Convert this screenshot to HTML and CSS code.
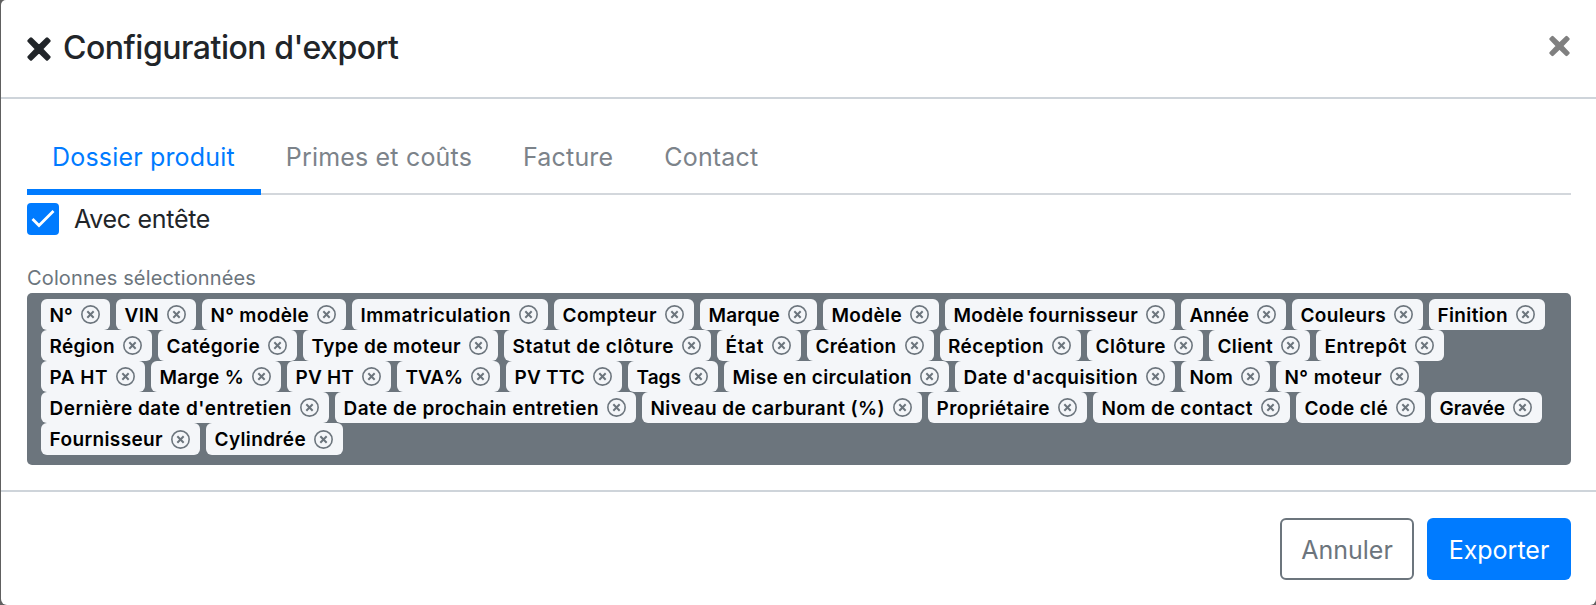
FILE: index.html
```html
<!DOCTYPE html>
<html lang="fr">
<head>
<meta charset="utf-8">
<title>Configuration d'export</title>
<link rel="stylesheet" href="styles.css">
</head>
<body>
<svg class="defs" aria-hidden="true">
  <symbol id="cross" viewBox="0 0 24 24"><path d="M4 2 12 9.6 20 2 22 4 14.4 12 22 20 20 22 12 14.4 4 22 2 20 9.6 12 2 4Z" fill="currentColor" stroke="currentColor" stroke-width="3.2" stroke-linejoin="round"/></symbol>
  <symbol id="remove" viewBox="0 0 18 18"><circle cx="9" cy="9" r="8.2" fill="none" stroke="currentColor" stroke-width="1.5"/><path d="M6 6l6 6M12 6l-6 6" fill="none" stroke="currentColor" stroke-width="1.9"/></symbol>
</svg>
<div class="modal">
  <header class="modal-header">
    <h5 class="modal-title"><svg class="title-icon"><use href="#cross"/></svg><span class="title-text">Configuration d'export</span></h5>
    <button class="close" aria-label="Fermer"><svg class="close-icon"><use href="#cross"/></svg></button>
  </header>
  <main class="modal-body">
    <nav class="tabs">
      <a class="tab active">Dossier produit</a>
      <a class="tab">Primes et coûts</a>
      <a class="tab">Facture</a>
      <a class="tab">Contact</a>
    </nav>
    <label class="check"><span class="box"><svg class="tick" viewBox="0 0 24 20"><path d="M1.5 10 8 16.5 22.5 2" fill="none" stroke="#fff" stroke-width="2.8"/></svg></span><span class="check-text">Avec entête</span></label>
    <div class="label">Colonnes sélectionnées</div>
    <div class="chips" id="chips"></div>
  </main>
  <footer class="modal-footer">
    <button class="btn outline">Annuler</button>
    <button class="btn primary">Exporter</button>
  </footer>
</div>
<script src="chips.js"></script>
</body>
</html>
```
FILE: chips.js
```js
// Each column: [name, chip width in px]
const rows = [
  [["N°", 69], ["VIN", 80], ["N° modèle", 144], ["Immatriculation", 196], ["Compteur", 140], ["Marque", 117], ["Modèle", 116], ["Modèle fournisseur", 230], ["Année", 105], ["Couleurs", 131], ["Finition", 116]],
  [["Région", 111], ["Catégorie", 139], ["Type de moteur", 195], ["Statut de clôture", 207], ["État", 84], ["Création", 126.5], ["Réception", 141.5], ["Clôture", 116], ["Client", 101], ["Entrepôt", 128]],
  [["PA HT", 104], ["Marge %", 130], ["PV HT", 104], ["TVA%", 103], ["PV TTC", 116], ["Tags", 90], ["Mise en circulation", 225], ["Date d'acquisition", 220], ["Nom", 89], ["N° moteur", 143]],
  [["Dernière date d'entretien", 288], ["Date de prochain entretien", 301], ["Niveau de carburant (%)", 280], ["Propriétaire", 159], ["Nom de contact", 197], ["Code clé", 129], ["Gravée", 111]],
  [["Fournisseur", 159], ["Cylindrée", 137]]
];
document.getElementById("chips").innerHTML = rows.map(row =>
  `<div class="chip-row">${row.map(([name, width]) =>
    `<span class="chip" style="width:${width}px"><span class="chip-text">${name}</span><svg class="chip-icon"><use href="#remove"/></svg></span>`).join("")}</div>`).join("");

// Track each label so that it fills its chip evenly.
const TEXT_INSET = 45.5;
document.querySelectorAll(".chip").forEach(chip => {
  const text = chip.querySelector(".chip-text");
  const room = parseFloat(chip.style.width) - TEXT_INSET;
  const spacing = (room - text.getBoundingClientRect().width) / text.textContent.length;
  text.style.letterSpacing = `${spacing}px`;
});
```
FILE: styles.css
```css
* { box-sizing: border-box; }
body { margin: 0; width: 1596px; height: 605px; overflow: hidden; background: #606060; font-family: Inter, "Liberation Sans", sans-serif; color: #212529; }
.defs { display: none; }
.modal { margin-left: 1px; height: 605px; background: #fff; border-radius: 5px 0 6px 6px; display: flex; flex-direction: column; }
.modal-header { height: 99px; flex: none; border-bottom: 2px solid #ced4da; padding: 0 26px; display: flex; justify-content: space-between; }
.modal-title { margin: 0; display: flex; font-size: 32px; font-weight: 500; line-height: 48px; padding-top: 24px; letter-spacing: -0.48px; color: #212529; }
.title-icon { width: 24px; height: 24px; margin: 13px 12px 0 0; }
.close { border: 0; background: none; padding: 0; margin: 35px 0 0 0; height: 22px; color: #808080; }
.close-icon { width: 21px; height: 22px; display: block; }
.modal-body { height: 393px; flex: none; border-bottom: 2px solid #ced4da; padding: 27px 25px 0 26px; }
.tabs { display: flex; height: 69px; border-bottom: 2px solid #d3d7dc; }
.tab { height: 69px; padding: 16px 26px 0 25px; font-size: 25px; line-height: 30px; color: #7c838a; white-space: nowrap; letter-spacing: 0.18px; }
.tab.active { color: #007bff; border-bottom: 6px solid #007bff; }
.check { display: flex; align-items: center; margin-top: 8px; height: 32px; }
.box { width: 32px; height: 32px; border-radius: 4px; background: #007bff; display: flex; align-items: center; justify-content: center; }
.tick { width: 24px; height: 20px; }
.check-text { font-size: 25px; line-height: 32px; margin-left: 15px; letter-spacing: -0.3px; }
.label { margin-top: 29px; font-size: 20px; line-height: 28px; height: 29px; color: #6c757d; letter-spacing: 0.14px; }
.chips { height: 172px; background: #6c757d; border-radius: 5px; padding: 6px 14px; }
.chip-row { display: flex; gap: 6px; height: 31px; }
.chip-row:last-child { height: 32px; }
.chip { flex: none; border-radius: 6px; background: #f4f6f9; color: #000; display: flex; align-items: center; justify-content: space-between; padding: 0 10px 0 8.5px; font-size: 19px; font-weight: 600; white-space: nowrap; }
.chip-text { padding-top: 1px; }
.chip-icon { flex: none; width: 19px; height: 19px; color: #6c757d; }
.modal-footer { display: flex; justify-content: flex-end; gap: 13px; padding: 26px 25px 0 0; }
.btn { height: 62px; border-radius: 6px; font: 400 25px/1 Inter, sans-serif; padding: 2px 0 0; }
.outline { width: 134px; border: 2px solid #6c757d; background: #fff; color: #6c757d; }
.primary { width: 144px; border: 0; background: #007bff; color: #fff; }
```
